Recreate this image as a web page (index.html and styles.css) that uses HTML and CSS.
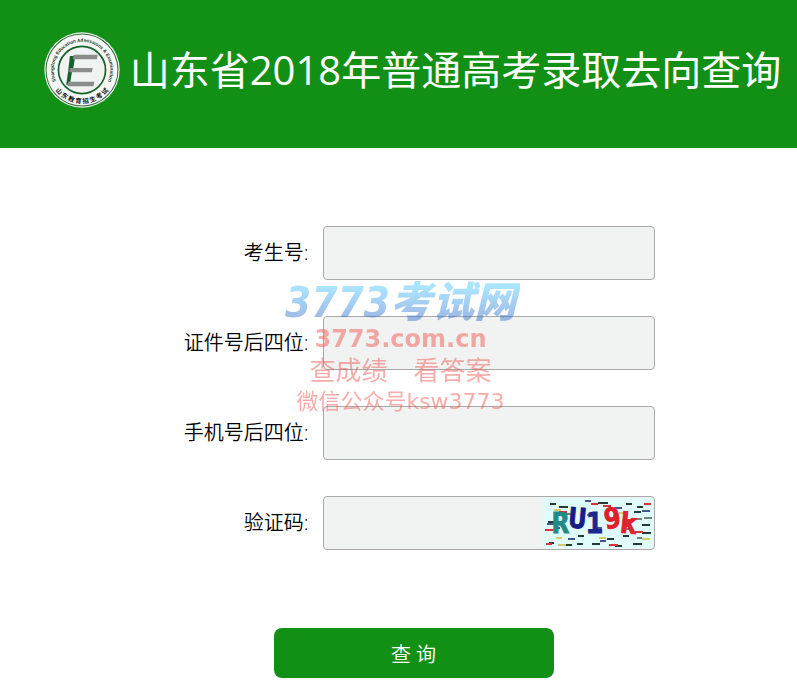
FILE: index.html
```html
<!DOCTYPE html>
<html lang="zh-CN">
<head>
<meta charset="utf-8">
<meta name="viewport" content="width=device-width, initial-scale=1">
<title>山东省2018年普通高考录取去向查询</title>
<link rel="stylesheet" href="styles.css">
</head>
<body>
<header class="header">
  <svg class="logo" viewBox="24 21 226 226" aria-hidden="true">
    <defs>
      <path id="arc-top" d="M62 172 A84 84 0 1 1 212 172"/>
      <path id="arc-bottom" d="M46 176 A101 101 0 0 0 228 176"/>
    </defs>
    <circle cx="137" cy="134" r="112" fill="#f5f8f5"/>
    <circle cx="137" cy="134" r="107" fill="none" stroke="#2c6d3a" stroke-width="3"/>
    <circle cx="137" cy="134" r="70" fill="#f1f2f2" stroke="#17622b" stroke-width="5"/>
    <text class="logo-en"><textPath href="#arc-top" startOffset="50%" text-anchor="middle">Shangdong Education Admissions &amp; Examination</textPath></text>
    <text class="logo-zh"><textPath href="#arc-bottom" startOffset="50%" text-anchor="middle">山 东 教 育 招 生 考 试</textPath></text>
    <path fill="#17622b" d="M101 92H117L111 128L107 141L101 178H90L96 136Z"/>
    <path fill="#8c8c8c" d="M112 89H184L181 102H110ZM101 128H169L166 141H99ZM96 169H174L171 182H94Z"/>
  </svg>
  <h1 class="title">山东省2018年普通高考录取去向查询</h1>
</header>
<main class="main">
  <form class="form">
    <div class="row">
      <label for="candidate">考生号:</label>
      <div class="field"><input id="candidate" type="text"></div>
    </div>
    <div class="row">
      <label for="idcard">证件号后四位:</label>
      <div class="field"><input id="idcard" type="text"></div>
    </div>
    <div class="row">
      <label for="phone">手机号后四位:</label>
      <div class="field"><input id="phone" type="text"></div>
    </div>
    <div class="row">
      <label for="captcha">验证码:</label>
      <div class="field">
        <input id="captcha" type="text">
        <svg class="captcha" viewBox="0 0 110 50" role="img" aria-label="验证码图片">
          <rect width="110" height="50" fill="#dffcfb"/>
          <g fill="none" stroke-width="2">
            <path stroke="#243c35" d="M7 6h6M16 9h9M55 5h10M83 6h6M91 14h7M99 27h8M5 24h8M80 38h6M35 38h6M34 46h6M49 46h8M90 46h9M22 47h7M99 35h9M64 41h7M6 45h5M72 48h7M94 9h6"/>
            <path stroke="#d83338" d="M48 6h7M16 14h8M2 32h9M92 34h8M60 8h8M66 47h9M101 6h7M3 46h6M82 22h7"/>
            <path stroke="#44558c" d="M42 3h6M4 26h7M71 10h8M25 41h7M99 13h8M57 43h6M53 30h6M12 30h5"/>
            <path stroke="#d4ca67" d="M11 12h7M13 40h6M99 41h8M76 15h6M56 40h7M15 47h8"/>
            <path stroke="#6e837c" d="M90 21h9M101 20h8M83 31h7M94 40h5M44 17h6M21 16h7"/>
          </g>
          <g class="captcha-text">
            <text x="9" y="35" fill="#238984" stroke="#238984">R</text>
            <text x="26" y="30" fill="#181c85" stroke="#181c85" transform="rotate(5 35 20)">U</text>
            <text x="43" y="35" fill="#1d258e" stroke="#1d258e">1</text>
            <text x="61" y="30" fill="#e31c2a" stroke="#e31c2a" transform="rotate(-8 68 22)">9</text>
            <text x="77" y="35" fill="#df2130" stroke="#df2130" transform="rotate(6 84 27)">k</text>
          </g>
        </svg>
      </div>
    </div>
    <button class="submit" type="submit">查 询</button>
    <div class="watermark">
      <p class="wm-name">3773考试网</p>
      <p class="wm-site">3773.com.cn</p>
      <p class="wm-slogan"><span>查成绩</span><span>看答案</span></p>
      <p class="wm-account">微信公众号<span>ksw3773</span></p>
    </div>
  </form>
</main>
</body>
</html>
```
FILE: styles.css
```css
* {
  box-sizing: border-box;
}

body {
  margin: 0;
  background: #fff;
  color: #000;
  font-family: "Open Sans", "Noto Sans CJK SC", sans-serif;
  font-size: 20px;
}

.header {
  display: flex;
  align-items: center;
  justify-content: center;
  gap: 10px;
  padding: 32px 0 40px 28px;
  background: #129016;
}

.logo {
  flex: none;
  width: 76px;
  height: 76px;
}

.logo-en {
  font: bold 14px "Liberation Sans", sans-serif;
  fill: #17372a;
}

.logo-zh {
  font: bold 19px "Noto Sans CJK SC", sans-serif;
  fill: #111;
}

.title {
  margin: 0;
  color: #fff;
  font-size: 40px;
  font-weight: 400;
  line-height: 64px;
  white-space: nowrap;
}

.main {
  padding: 78px 16px 9px;
}

.form {
  position: relative;
  display: flex;
  flex-direction: column;
  gap: 36px;
  max-width: 512px;
  margin: 0 auto;
}

.row {
  display: grid;
  grid-template-columns: 170px minmax(0, 1fr);
  align-items: center;
  gap: 10px;
}

.row label {
  font-weight: 350;
  line-height: 28px;
  text-align: right;
  padding-right: 4px;
}

.field {
  display: flex;
  align-items: center;
  height: 54px;
  padding-right: 1px;
  border: 1px solid #a9a9a9;
  border-radius: 4px;
  background: #f1f3f2;
}

.field input {
  flex: 1;
  min-width: 0;
  height: 100%;
  padding: 0 10px;
  border: 0;
  outline: 0;
  background: transparent;
  font: inherit;
}

.captcha {
  flex: none;
  width: 110px;
  height: 50px;
}

.captcha-text {
  font: bold 28px "DejaVu Sans Mono", monospace;
  stroke-width: 1;
}

.submit {
  align-self: center;
  width: 280px;
  height: 50px;
  margin: 42px 0 0 30px;
  border: 0;
  border-radius: 8px;
  background: #129016;
  color: #fff;
  font: inherit;
  font-weight: 350;
}

.watermark {
  position: absolute;
  top: 52px;
  left: 138px;
  width: 240px;
  display: flex;
  flex-direction: column;
  align-items: center;
  color: #f04a44;
  opacity: 0.45;
  pointer-events: none;
  white-space: nowrap;
}

.watermark p {
  margin: 0;
}

.wm-name {
  padding: 0 4px;
  background: linear-gradient(#46c4ff 20%, #2b68c8 80%);
  background-clip: text;
  color: transparent;
  font: italic 900 42px/50px "DejaVu Sans Condensed", "Noto Sans CJK SC", sans-serif;
}

.wm-site {
  font: bold 24px/22px "DejaVu Sans", sans-serif;
}

.wm-slogan {
  display: flex;
  gap: 26px;
  font: 26px/38px "Noto Sans CJK SC", sans-serif;
}

.wm-account {
  font: 22px/22px "Noto Sans CJK SC", sans-serif;
}

.wm-account span {
  font-family: "DejaVu Sans", sans-serif;
}
```
